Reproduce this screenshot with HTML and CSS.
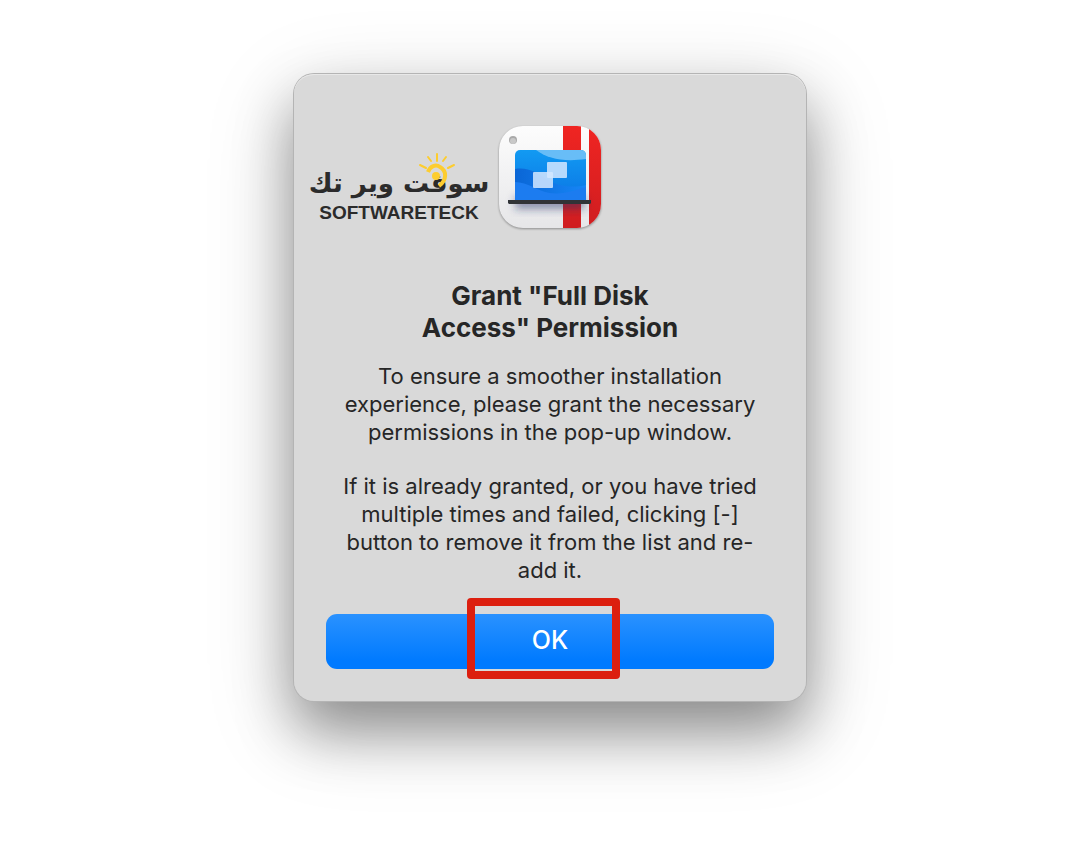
FILE: index.html
```html
<!DOCTYPE html>
<html lang="en">
<head>
    <meta charset="utf-8">
    <title>Grant "Full Disk Access" Permission</title>
    <link rel="stylesheet" href="styles.css">
</head>
<body>
    <div class="dialog" role="dialog" aria-labelledby="dialog-title">
        <div class="dialog-head">
            <svg class="app-icon" viewBox="0 0 104 104" aria-hidden="true">
                <defs>
                    <linearGradient id="paper" x1="0" y1="0" x2="0" y2="1">
                        <stop offset="0" stop-color="#fdfdfd"/>
                        <stop offset="1" stop-color="#e6e6e8"/>
                    </linearGradient>
                    <linearGradient id="red" x1="0" y1="0" x2="0" y2="1">
                        <stop offset="0" stop-color="#f02522"/>
                        <stop offset="1" stop-color="#cf1d20"/>
                    </linearGradient>
                    <linearGradient id="screen" x1="0" y1="0" x2="0" y2="1">
                        <stop offset="0" stop-color="#129af2"/>
                        <stop offset="1" stop-color="#0a74e4"/>
                    </linearGradient>
                    <linearGradient id="wave" x1="0" y1="0" x2="1" y2="0">
                        <stop offset="0" stop-color="#0a66d6"/>
                        <stop offset="1" stop-color="#1686f6"/>
                    </linearGradient>
                    <filter id="soft" x="-20%" y="-60%" width="140%" height="220%">
                        <feGaussianBlur stdDeviation="4"/>
                    </filter>
                    <clipPath id="tile"><rect x="1" y="1" width="102" height="102" rx="24"/></clipPath>
                    <clipPath id="glass"><path d="M17 77V30a5 5 0 0 1 5-5h61a5 5 0 0 1 5 5v47z"/></clipPath>
                </defs>
                <g clip-path="url(#tile)">
                    <rect width="104" height="104" fill="url(#paper)"/>
                    <rect x="65" width="18" height="104" fill="url(#red)"/>
                    <rect x="91" width="13" height="104" fill="url(#red)"/>
                    <rect x="17" y="72" width="70" height="12" fill="#1d2f6a" fill-opacity="0.5" filter="url(#soft)"/>
                </g>
                <circle cx="15" cy="15" r="4" fill="#a9a9a9"/>
                <circle cx="15" cy="16" r="3" fill="#c8c8c8"/>
                <g clip-path="url(#glass)">
                    <rect x="17" y="25" width="71" height="52" fill="url(#screen)"/>
                    <path d="M38 25c12 9 28 12 50 9V25z" fill="#68bdf7"/>
                    <path d="M17 44c14-2 22 4 31 10s24 10 40 6v17H17z" fill="url(#wave)"/>
                    <path d="M17 57c13 0 22 9 35 11s25-3 36-6v15H17z" fill="#1c7cf0"/>
                </g>
                <rect x="49" y="37" width="20" height="16" rx="1" fill="#d5e8ff" fill-opacity="0.85"/>
                <rect x="35" y="47" width="20" height="16" rx="1" fill="#d5e8ff" fill-opacity="0.85"/>
                <path d="M10 75h83v3l-1 1H11l-1-1z" fill="#303337"/>
            </svg>
            <div class="brand">
                <span class="brand-arabic" lang="ar" dir="rtl">سوفت وير تك</span>
                <span class="brand-latin">SOFTWARETECK</span>
                <svg class="brand-bulb" viewBox="0 0 40 40" aria-hidden="true">
                    <g stroke="#fdcd2f" stroke-width="2" stroke-linecap="round" fill="none">
                        <path d="M20 3v7M11 6l3 4M29 6l-3 4M3 14l6 3M37 14l-6 3"/>
                    </g>
                    <path d="M11 21c2-6 8-8 12-5 7 4 7 13-1 19" fill="none" stroke="#fdcd2f" stroke-width="4"/>
                    <circle cx="19" cy="25" r="4" fill="#fdcd2f"/>
                </svg>
            </div>
        </div>

        <h1 id="dialog-title">Grant "Full Disk<br>Access" Permission</h1>
        <p>To ensure a smoother installation experience, please grant the necessary permissions in the pop-up window.</p>
        <p>If it is already granted, or you have tried multiple times and failed, clicking [-] button to remove it from the list and re-add it.</p>

        <div class="actions">
            <button class="ok-button" type="button">OK</button>
            <div class="highlight"></div>
        </div>
    </div>
</body>
</html>
```

FILE: styles.css
```css
* {
    box-sizing: border-box;
}
body {
    min-height: 100vh;
    margin: 0;
    padding: 74px 0 74px 20px;
    background-color: #ffffff;
    color: #262626;
    font-family: Inter, "Liberation Sans", sans-serif;
}
.dialog {
    max-width: 512px;
    margin: 0 auto;
    padding: 51px 32px 32px;
    background-color: #d9d9d9;
    border-radius: 20px;
    box-shadow: 0 0 0 1px #b4b4b4, inset 0 1px 0 #e8e8e8, 0 30px 56px rgba(0, 0, 0, 0.36), 0 24px 90px rgba(0, 0, 0, 0.18);
    text-align: center;
}
.dialog-head {
    position: relative;
}
.app-icon {
    display: block;
    width: 104px;
    height: 104px;
    margin: 0 auto;
    filter: drop-shadow(0 1px 1px rgba(0, 0, 0, 0.35));
}

/* site logo, laid over the dialog beside the icon */
.brand {
    position: absolute;
    top: 38px;
    right: 50%;
    width: 184px;
    margin-right: 59px;
    color: #2b2b2b;
    font-weight: 700;
    white-space: nowrap;
}
.brand-arabic,
.brand-latin {
    display: block;
}
.brand-arabic {
    font-family: "DejaVu Sans", sans-serif;
    font-size: 26px;
    line-height: 40px;
}
.brand-latin {
    font-family: "Liberation Sans", sans-serif;
    font-size: 19px;
    line-height: 20px;
}
.brand-bulb {
    position: absolute;
    top: -12px;
    right: 34px;
    width: 40px;
    height: 40px;
}

h1 {
    margin: 51px 0 18px;
    font-size: 26px;
    font-weight: 700;
    line-height: 32px;
}
p {
    margin: 0 16px 26px;
    font-size: 22px;
    line-height: 28px;
}
.actions {
    position: relative;
    margin-top: 30px;
}
.ok-button {
    display: block;
    width: 100%;
    height: 55px;
    padding: 0 0 4px;
    border: 0;
    border-radius: 11px;
    background: linear-gradient(#2a92ff, #007aff 85%);
    color: #ffffff;
    font-family: inherit;
    font-size: 25px;
    font-weight: 500;
}
.highlight {
    position: absolute;
    top: -16px;
    left: 141px;
    width: 153px;
    height: 81px;
    border: 8px solid #dc1f0f;
    border-radius: 4px;
    pointer-events: none;
}
```
